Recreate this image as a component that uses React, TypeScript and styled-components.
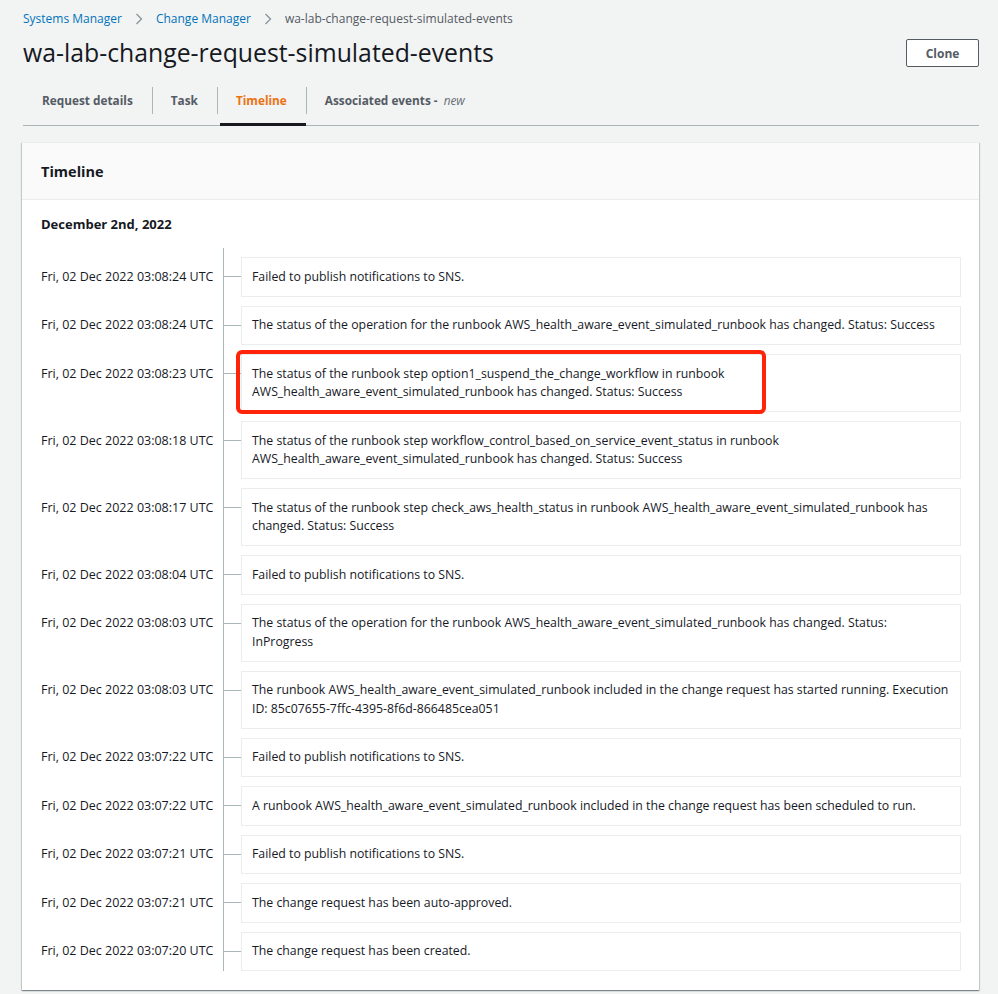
import React from "react";
import styled, { createGlobalStyle } from "styled-components";

const GlobalStyle = createGlobalStyle`
  html, body { margin: 0; padding: 0; background: #f2f3f3; }
  body {
    font-family: "Amazon Ember", "Open Sans", "Helvetica Neue", Arial, sans-serif;
    color: #16191f;
    -webkit-font-smoothing: antialiased;
  }
  * { box-sizing: border-box; }
`;

const Page = styled.div`
  padding: 10px 19px 6px 23px;
`;

const Breadcrumbs = styled.nav`
  display: flex;
  align-items: center;
  gap: 13px;
  font-size: 12px;
  line-height: 17px;
  height: 17px;
`;

const Crumb = styled.a<{ $current?: boolean }>`
  color: ${(p) => (p.$current ? "#545b64" : "#0073bb")};
  text-decoration: none;
`;

const Chevron = () => (
  <svg width="8" height="12" viewBox="0 0 8 12" fill="none">
    <path d="M1.5 1 L6.5 6 L1.5 11" stroke="#879596" strokeWidth="1.3" />
  </svg>
);

const HeaderRow = styled.div`
  display: flex;
  align-items: flex-start;
  justify-content: space-between;
  margin-top: 10px;
`;

const Title = styled.h1`
  margin: 0;
  font-size: 24.8px;
  font-weight: 400;
  line-height: 30px;
`;

const CloneButton = styled.button`
  margin-top: 2px;
  width: 73px;
  height: 28px;
  border: 1px solid #545b64;
  border-radius: 2px;
  background: #fff;
  color: #545b64;
  font-family: inherit;
  font-weight: 700;
  font-size: 12px;
  padding: 0;
`;

const TabBar = styled.div`
  display: flex;
  align-items: stretch;
  margin-top: 7px;
  border-bottom: 1px solid #aab7b8;
  height: 52px;
`;

const Tab = styled.div<{ $active?: boolean; $first?: boolean }>`
  position: relative;
  display: flex;
  align-items: center;
  padding: 0 19px;
  font-size: 11.8px;
  font-weight: 700;
  color: ${(p) => (p.$active ? "#ec7211" : "#545b64")};
  &::before {
    content: "";
    display: ${(p) => (p.$first ? "none" : "block")};
    position: absolute;
    left: 0;
    top: 13px;
    height: 27px;
    width: 1px;
    background: #aab7b8;
  }
  &::after {
    content: "";
    display: ${(p) => (p.$active ? "block" : "none")};
    position: absolute;
    left: 3px;
    right: 0;
    bottom: -1px;
    height: 3px;
    background: #16191f;
  }
`;

const NewTag = styled.span`
  font-style: italic;
  font-weight: 400;
  color: #687078;
  margin-left: 6px;
`;

const Panel = styled.section`
  margin-top: 16px;
  margin-left: -1px;
  background: #fff;
  border-top: 1px solid #eaeded;
  box-shadow: 0 1px 1px 0 rgba(0, 28, 36, 0.3), 1px 1px 1px 0 rgba(0, 28, 36, 0.15),
    -1px 1px 1px 0 rgba(0, 28, 36, 0.15);
`;

const PanelHeader = styled.header`
  background: #fafafa;
  border-bottom: 1px solid #eaeded;
  height: 57px;
  display: flex;
  align-items: center;
  padding: 0 19px;
  font-size: 14.5px;
  font-weight: 700;
`;

const PanelBody = styled.div`
  padding: 15px 18px 19px 19px;
`;

const DateHeading = styled.h3`
  margin: 0 0 15px;
  font-size: 13px;
  font-weight: 700;
  line-height: 18px;
`;

const Row = styled.div`
  display: grid;
  grid-template-columns: 182px 1fr;
`;

const Time = styled.div`
  font-size: 12.5px;
  line-height: 18.5px;
  padding-top: 19.5px;
  white-space: nowrap;
`;

const Track = styled.div`
  border-left: 1px solid #aab7b8;
  padding: 9px 0 0 17px;
`;

const Card = styled.div`
  position: relative;
  border: 1px solid #eaeded;
  padding: 9.5px 4px 9.5px 10px;
  font-size: 12.3px;
  line-height: 18.5px;
  white-space: pre-line;
  &::before {
    content: "";
    position: absolute;
    left: -18px;
    top: 18px;
    width: 17px;
    height: 1px;
    background: #aab7b8;
  }
`;

const Highlight = styled.div`
  position: absolute;
  left: -6px;
  top: -5px;
  width: 530px;
  height: 64px;
  border: 4px solid #ff230a;
  border-radius: 6px;
  pointer-events: none;
`;

type Ev = { time: string; text: string; highlight?: boolean };

const events: Ev[] = [
  { time: "Fri, 02 Dec 2022 03:08:24 UTC", text: "Failed to publish notifications to SNS." },
  {
    time: "Fri, 02 Dec 2022 03:08:24 UTC",
    text: "The status of the operation for the runbook AWS_health_aware_event_simulated_runbook has changed. Status: Success",
  },
  {
    time: "Fri, 02 Dec 2022 03:08:23 UTC",
    text: "The status of the runbook step option1_suspend_the_change_workflow in runbook\nAWS_health_aware_event_simulated_runbook has changed. Status: Success",
    highlight: true,
  },
  {
    time: "Fri, 02 Dec 2022 03:08:18 UTC",
    text: "The status of the runbook step workflow_control_based_on_service_event_status in runbook\nAWS_health_aware_event_simulated_runbook has changed. Status: Success",
  },
  {
    time: "Fri, 02 Dec 2022 03:08:17 UTC",
    text: "The status of the runbook step check_aws_health_status in runbook AWS_health_aware_event_simulated_runbook has\nchanged. Status: Success",
  },
  { time: "Fri, 02 Dec 2022 03:08:04 UTC", text: "Failed to publish notifications to SNS." },
  {
    time: "Fri, 02 Dec 2022 03:08:03 UTC",
    text: "The status of the operation for the runbook AWS_health_aware_event_simulated_runbook has changed. Status:\nInProgress",
  },
  {
    time: "Fri, 02 Dec 2022 03:08:03 UTC",
    text: "The runbook AWS_health_aware_event_simulated_runbook included in the change request has started running. Execution\nID: 85c07655-7ffc-4395-8f6d-866485cea051",
  },
  { time: "Fri, 02 Dec 2022 03:07:22 UTC", text: "Failed to publish notifications to SNS." },
  {
    time: "Fri, 02 Dec 2022 03:07:22 UTC",
    text: "A runbook AWS_health_aware_event_simulated_runbook included in the change request has been scheduled to run.",
  },
  { time: "Fri, 02 Dec 2022 03:07:21 UTC", text: "Failed to publish notifications to SNS." },
  { time: "Fri, 02 Dec 2022 03:07:21 UTC", text: "The change request has been auto-approved." },
  { time: "Fri, 02 Dec 2022 03:07:20 UTC", text: "The change request has been created." },
];

export default function App() {
  return (
    <>
      <GlobalStyle />
      <Page>
        <Breadcrumbs>
          <Crumb href="#">Systems Manager</Crumb>
          <Chevron />
          <Crumb href="#">Change Manager</Crumb>
          <Chevron />
          <Crumb $current>wa-lab-change-request-simulated-events</Crumb>
        </Breadcrumbs>
        <HeaderRow>
          <Title>wa-lab-change-request-simulated-events</Title>
          <CloneButton>Clone</CloneButton>
        </HeaderRow>
        <TabBar>
          <Tab $first>Request details</Tab>
          <Tab>Task</Tab>
          <Tab $active>Timeline</Tab>
          <Tab>
            Associated events -<NewTag>new</NewTag>
          </Tab>
        </TabBar>
        <Panel>
          <PanelHeader>Timeline</PanelHeader>
          <PanelBody>
            <DateHeading>December 2nd, 2022</DateHeading>
            {events.map((e, i) => (
              <Row key={i}>
                <Time>{e.time}</Time>
                <Track>
                  <Card>
                    {e.text}
                    {e.highlight && <Highlight />}
                  </Card>
                </Track>
              </Row>
            ))}
          </PanelBody>
        </Panel>
      </Page>
    </>
  );
}
